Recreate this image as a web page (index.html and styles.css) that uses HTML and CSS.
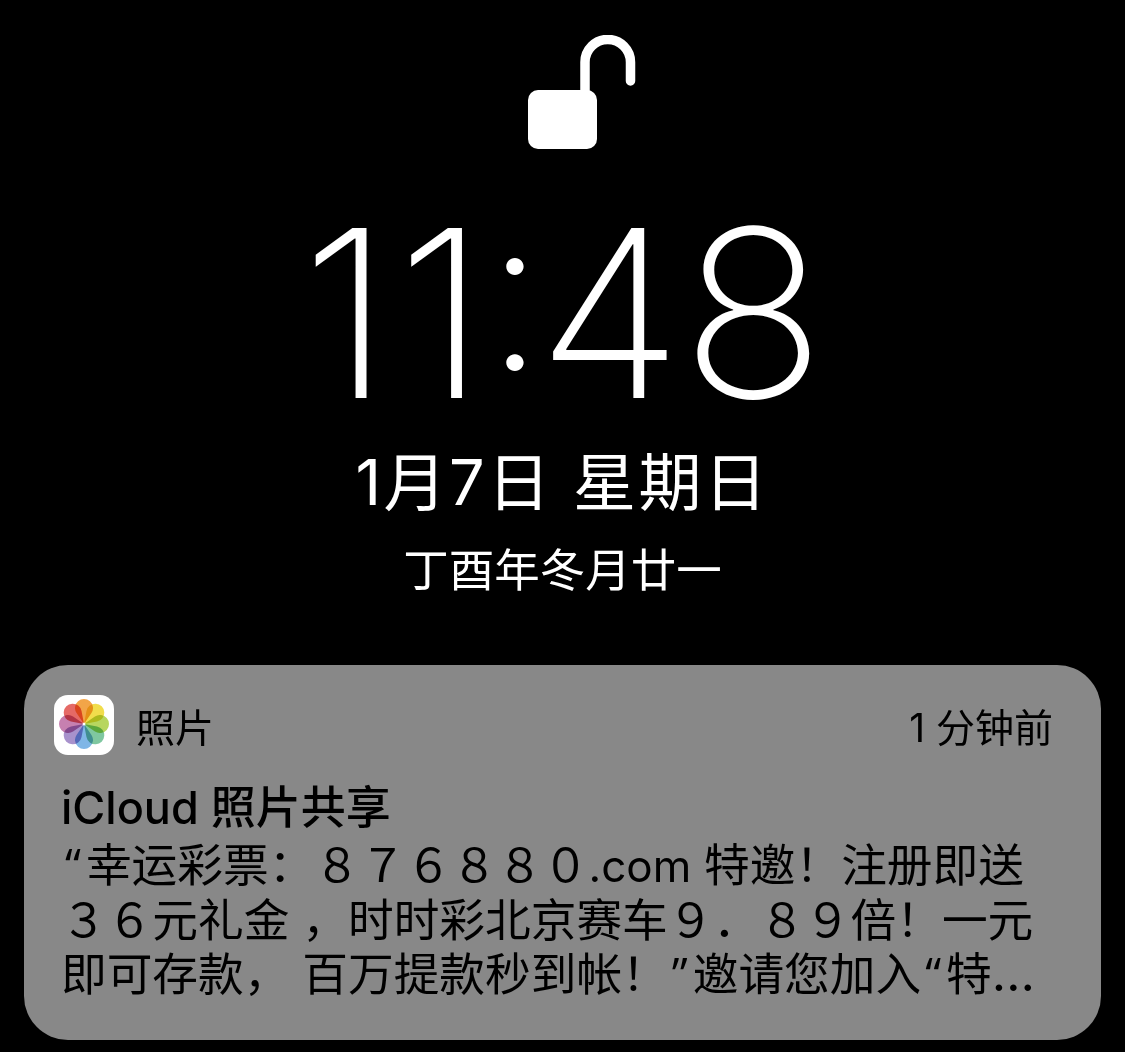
FILE: index.html
```html
<!DOCTYPE html>
<html lang="zh-CN">
<head>
    <meta charset="UTF-8">
    <title>锁屏</title>
    <link rel="stylesheet" href="styles.css">
</head>
<body>
    <div class="lock-screen">
        <svg class="lock-icon" viewBox="0 0 108 114" width="108" height="114">
            <path class="shackle" d="M57 60V27.200a22.750 22.750 0 0 1 45.500 0V46"/>
            <rect class="lock-body" x="0" y="55" width="69" height="59" rx="10"/>
        </svg>
        <div class="clock"><span class="first-digit">1</span>1<span class="colon">:</span>48</div>
        <div class="date">1月7日 星期日</div>
        <div class="lunar">丁酉年冬月廿一</div>
        <div class="card">
            <div class="card-head">
                <svg class="app-icon" viewBox="0 0 60 60" width="60" height="60">
                    <defs>
                        <path id="petal" d="M30 29L22.560 18.070A9 9 0 1 1 37.440 18.070Z"/>
                    </defs>
                    <rect class="app-bg" width="60" height="60" rx="14"/>
                    <use class="petal" href="#petal" fill="#f2a548"/>
                    <use class="petal" href="#petal" fill="#f1dd4c" transform="rotate(45 30 29)"/>
                    <use class="petal" href="#petal" fill="#b7d65f" transform="rotate(90 30 29)"/>
                    <use class="petal" href="#petal" fill="#7fc7a0" transform="rotate(135 30 29)"/>
                    <use class="petal" href="#petal" fill="#7fb6e6" transform="rotate(180 30 29)"/>
                    <use class="petal" href="#petal" fill="#a892cc" transform="rotate(225 30 29)"/>
                    <use class="petal" href="#petal" fill="#c680b0" transform="rotate(270 30 29)"/>
                    <use class="petal" href="#petal" fill="#e56a66" transform="rotate(315 30 29)"/>
                    <circle class="app-bg" cx="30" cy="29" r="1.500"/>
                </svg>
                <span class="app-name">照片</span>
                <span class="time-ago">1 分钟前</span>
            </div>
            <div class="card-title">iCloud 照片共享</div>
            <p class="card-text"><span class="quote">“</span>幸运彩票：８７６８８０<span class="domain">.com</span> 特邀！注册即送<br>３６元礼金 ，时时彩北京赛车９．８９倍！一元<br>即可存款， 百万提款秒到帐！<span class="quote">”</span>邀请您加入<span class="quote">“</span>特<span class="ellipsis">…</span></p>
        </div>
    </div>
</body>
</html>
```

FILE: styles.css
```css
* {
    margin: 0;
    padding: 0;
    box-sizing: border-box;
}
body {
    background: #000;
    color: #fff;
    font-family: 'Inter', 'Noto Sans CJK SC', sans-serif;
    overflow: hidden;
}
.lock-screen {
    height: 1052px;
    display: flex;
    flex-direction: column;
    align-items: center;
}
.lock-icon {
    display: block;
    margin-top: 35px;
    margin-left: 39px;
}
.shackle {
    fill: none;
    stroke: #fff;
    stroke-width: 9.500;
    stroke-linecap: round;
}
.lock-body {
    fill: #fff;
}
.clock {
    margin-top: 34px;
    font-size: 234px;
    font-weight: 200;
    line-height: 260px;
    letter-spacing: -1.500px;
    transform: scaleX(1.020);
}
.first-digit {
    margin-right: 6px;
}
.colon {
    margin-left: -1px;
    letter-spacing: -8.500px;
    font-size: 216px;
    font-weight: 200;
    line-height: 0;
    vertical-align: 28px;
}
.date {
    margin-top: 0;
    font-size: 63px;
    line-height: 78px;
    letter-spacing: 2.500px;
}
.lunar {
    margin-top: 20px;
    font-size: 45.500px;
    line-height: 60px;
}
.card {
    width: 1077px;
    height: 375px;
    margin-top: 64px;
    padding: 30px 48px 0 30px;
    background: #888;
    border-radius: 44px;
    color: #000;
}
.card-head {
    display: flex;
    align-items: center;
    height: 60px;
}
.app-icon {
    display: block;
}
.app-bg {
    fill: #fff;
}
.petal {
    mix-blend-mode: multiply;
}
.app-name {
    margin-left: 22px;
    font-size: 39px;
}
.time-ago {
    margin-left: auto;
    font-size: 39px;
}
.card-title {
    margin-top: 25px;
    margin-left: 7px;
    font-size: 45px;
    font-weight: 500;
    line-height: 56px;
}
.card-text {
    margin-top: 3px;
    margin-left: 7px;
    font-size: 45.700px;
    line-height: 54.500px;
    white-space: nowrap;
}
.domain {
    font-size: 44px;
}
.ellipsis {
    font-size: 50px;
    line-height: 0;
}
.quote {
    padding: 0 5px 0 4px;
    font-family: 'Open Sans', sans-serif;
    line-height: 0;
}
```
